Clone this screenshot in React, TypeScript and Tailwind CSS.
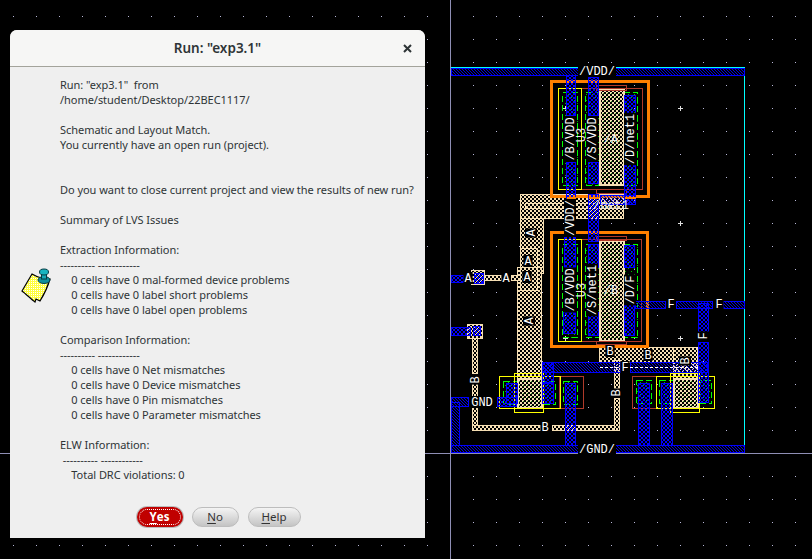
const FONT = "font-['Noto_Sans',sans-serif]";

const bodyText = `Run: "exp3.1"  from
/home/student/Desktop/22BEC1117/

Schematic and Layout Match.
You currently have an open run (project).


Do you want to close current project and view the results of new run?

Summary of LVS Issues

Extraction Information:
---------- ------------
    0 cells have 0 mal-formed device problems
    0 cells have 0 label short problems
    0 cells have 0 label open problems

Comparison Information:
---------- ------------
    0 cells have 0 Net mismatches
    0 cells have 0 Device mismatches
    0 cells have 0 Pin mismatches
    0 cells have 0 Parameter mismatches

ELW Information:
 ---------- ------------
    Total DRC violations: 0`;

type Box = [number, number, number, number];

const grid: number[][] = [];
for (let x = 13; x < 812; x += 23) {
  for (let y = 16; y < 559; y += 23) grid.push([x, y]);
}

// rails are plain hatch, the narrower wires are cross hatch
const rails: Box[] = [
  [451, 68, 744, 75],
  [451, 445, 744, 452],
  [542, 362, 620, 372], [630, 362, 707, 372],
  [635, 301, 665, 308], [676, 301, 712, 308], [723, 301, 744, 308],
  [600, 195, 635, 204],
  [451, 397, 468, 406], [451, 402, 459, 445],
];

const metal: Box[] = [
  [566, 75, 575, 115], [566, 162, 575, 203], [588, 77, 598, 115], [588, 162, 598, 183],
  [624, 95, 635, 113], [624, 162, 635, 204],
  [588, 194, 598, 241], [564, 230, 575, 267], [563, 312, 575, 333], [588, 244, 598, 267],
  [588, 312, 598, 335], [624, 245, 634, 267], [624, 303, 634, 335],
  [698, 303, 708, 332], [698, 342, 708, 402],
  [451, 275, 463, 282], [474, 273, 483, 283], [451, 327, 470, 335], [473, 326, 480, 335],
  [542, 362, 553, 382],
  [506, 383, 517, 403], [542, 383, 553, 403], [565, 383, 575, 445],
  [497, 397, 516, 406],
  [638, 383, 649, 445], [661, 383, 672, 445],
];

const tan: Box[] = [
  [520, 194, 623, 218], [520, 218, 543, 273], [517, 267, 541, 408],
  [599, 347, 697, 362], [673, 347, 697, 408],
  [471, 270, 484, 284], [484, 275, 501, 280], [511, 275, 520, 280],
  [467, 324, 482, 338], [472, 338, 477, 373], [472, 383, 477, 430],
  [472, 425, 540, 430], [552, 425, 619, 430], [614, 360, 619, 388], [614, 398, 619, 430],
];

const gates: Box[] = [
  [599, 89, 623, 184], [599, 240, 623, 340], [517, 378, 541, 407], [673, 378, 697, 407],
];

const green: Box[] = [
  [562, 92, 577, 185], [585, 92, 600, 185], [623, 92, 637, 185],
  [562, 244, 577, 337], [585, 244, 600, 337], [623, 244, 637, 337],
  [503, 381, 555, 404], [563, 381, 577, 404], [636, 380, 651, 403], [659, 380, 711, 403],
];

const brown: Box[] = [
  [581, 88, 642, 189], [596, 85, 626, 90], [596, 189, 626, 193],
  [581, 239, 641, 341], [596, 236, 626, 240], [596, 341, 626, 344],
  [559, 376, 583, 408], [632, 376, 656, 408],
];

const yellow: Box[] = [
  [558, 88, 581, 189], [558, 239, 581, 341],
  [499, 376, 560, 408], [514, 373, 543, 412], [656, 376, 714, 408], [670, 373, 699, 412],
];

type LabelDef = { x: number; y: number; t: string; up?: boolean; dim?: boolean };

const labels: LabelDef[] = [
  { x: 597, y: 71, t: "/VDD/" }, { x: 597, y: 449, t: "/GND/" },
  { x: 570, y: 139, t: "/B/VDD", up: true }, { x: 592, y: 139, t: "/S/VDD", up: true },
  { x: 630, y: 139, t: "/D/net1", up: true }, { x: 570, y: 218, t: "/VDD/", up: true },
  { x: 570, y: 290, t: "/B/VDD", up: true }, { x: 592, y: 290, t: "/S/net1", up: true },
  { x: 630, y: 290, t: "/D/F", up: true },
  { x: 531, y: 233, t: "A", up: true }, { x: 528, y: 261, t: "A" }, { x: 527, y: 277, t: "A" },
  { x: 529, y: 321, t: "A", up: true }, { x: 468, y: 278, t: "A" }, { x: 506, y: 278, t: "A" },
  { x: 671, y: 304, t: "F" }, { x: 719, y: 304, t: "F" }, { x: 703, y: 336, t: "F", up: true },
  { x: 625, y: 367, t: "F" }, { x: 475, y: 380, t: "B", up: true }, { x: 482, y: 402, t: "GND" },
  { x: 545, y: 427, t: "B" }, { x: 616, y: 393, t: "B", up: true },
  { x: 610, y: 351, t: "B" }, { x: 648, y: 355, t: "B" }, { x: 685, y: 361, t: "B", up: true },
  { x: 581, y: 135, t: "U3", up: true, dim: true }, { x: 611, y: 139, t: "/A", dim: true },
  { x: 581, y: 290, t: "U3", up: true, dim: true }, { x: 611, y: 290, t: "/B", dim: true },
  { x: 611, y: 205, t: "/net1", dim: true },
];

function Rects({ items, ...props }: { items: Box[] } & React.SVGProps<SVGRectElement>) {
  return (
    <>
      {items.map(([x1, y1, x2, y2], i) => (
        <rect key={i} x={x1 + 0.5} y={y1 + 0.5} width={x2 - x1} height={y2 - y1} {...props} />
      ))}
    </>
  );
}

function Label({ x, y, t, up, dim }: LabelDef) {
  const w = t.length * 7.2 + 2;
  return (
    <g transform={up ? `rotate(-90 ${x} ${y})` : undefined}>
      {!dim && <rect x={x - w / 2} y={y - 6} width={w} height={12} fill="#000" />}
      <text
        x={x}
        y={y + 4}
        textAnchor="middle"
        fontFamily="'Liberation Mono', monospace"
        fontSize={12}
        fill={dim ? "#e8e8e8" : "#fff"}
      >
        {t}
      </text>
    </g>
  );
}

function Layout() {
  return (
    <svg className="absolute inset-0" width={812} height={559}>
      <defs>
        <pattern id="m1" width="3" height="3" patternUnits="userSpaceOnUse">
          <path d="M0 0h1v1h-1zM1 1h1v1h-1zM2 2h1v1h-1z" fill="#0000e0" />
        </pattern>
        <pattern id="m2" width="4" height="4" patternUnits="userSpaceOnUse">
          <path d="M0 0h1v1h-1zM1 1h1v1h-1zM2 2h1v1h-1zM3 3h1v1h-1zM3 0h1v1h-1zM2 1h1v1h-1zM1 2h1v1h-1zM0 3h1v1h-1z" fill="#0000ff" />
        </pattern>
        <pattern id="poly" width="4" height="4" patternUnits="userSpaceOnUse">
          <rect width="4" height="4" fill="#000" />
          <rect width="2" height="2" fill="#f5deb3" />
          <rect x="2" y="2" width="2" height="2" fill="#f5deb3" />
        </pattern>
        <pattern id="gate" width="4" height="4" patternUnits="userSpaceOnUse">
          <rect width="4" height="4" fill="#f5deb3" />
          <rect width="2" height="2" fill="#000" />
          <rect x="2" y="2" width="2" height="2" fill="#000" />
          <rect x="3" y="1" width="1" height="1" fill="#3fa02a" />
        </pattern>
        <pattern id="diff" width="6" height="6" patternUnits="userSpaceOnUse">
          <rect x="1" y="1" width="1" height="1" fill="#00c000" />
          <rect x="4" y="4" width="1" height="1" fill="#00c000" />
        </pattern>
      </defs>

      <g shapeRendering="crispEdges">
        {grid.map(([x, y], i) => (
          <rect key={i} x={x} y={y} width={1} height={1} fill="#b8b8d8" />
        ))}
        {[565, 680].map((x) =>
          [108, 223, 338].map((y) => (
            <path key={`${x}-${y}`} d={`M${x - 2} ${y}h5M${x} ${y - 2}v5`} stroke="#e0e0e0" fill="none" />
          )),
        )}

        <path d="M450.5 0V559M0 453.5H812" stroke="#8f8fb5" fill="none" />
        <path d="M451 67.5H744.5V453" stroke="#00ffff" fill="none" />

        <Rects items={tan} fill="url(#poly)" stroke="#f5deb3" />
        <Rects items={[[520, 248, 537, 290], [525, 203, 623, 208]]} fill="none" stroke="#f5deb3" />
        <Rects items={green} fill="url(#diff)" stroke="#00ff00" strokeDasharray="6 3" />
        <Rects items={gates} fill="url(#gate)" stroke="#f5deb3" strokeWidth={2} />
        <Rects items={[[551, 81, 648, 196], [551, 232, 647, 346]]} fill="none" stroke="#ff8000" strokeWidth={3} />
        <Rects items={brown} fill="none" stroke="#b03a2a" />
        <Rects items={yellow} fill="none" stroke="#ffff00" />
        <Rects items={rails} fill="url(#m1)" stroke="#0000ff" />
        <Rects items={metal} fill="url(#m2)" stroke="#0000ff" />
        <Rects items={[[566, 196, 575, 198], [588, 196, 598, 198], [624, 196, 635, 198]]} fill="#ff8000" />
        <path d="M600 367.5h20M630 367.5h70" stroke="#fff" strokeDasharray="3 2" fill="none" />
      </g>

      {labels.map((l) => (
        <Label key={`${l.x}-${l.y}`} {...l} />
      ))}
    </svg>
  );
}

function NoteIcon() {
  return (
    <svg width={32} height={36} viewBox="0 0 32 36">
      <defs>
        <pattern id="note" width="2" height="2" patternUnits="userSpaceOnUse">
          <rect width="2" height="2" fill="#ffff40" />
          <rect width="1" height="1" fill="#fff" />
        </pattern>
      </defs>
      <path
        d="M1 23 L11 6 C16 9 22 11 29 11 C27 18 24 25 19 33 L15 31 L14 34 C10 31 5 26 1 23Z"
        fill="url(#note)"
        stroke="#000"
        strokeWidth={1.2}
      />
      <ellipse cx="23" cy="12" rx="6" ry="3.5" fill="#0f8f9b" stroke="#063c44" />
      <rect x="20.5" y="6" width="5" height="5" fill="#15a8b5" stroke="#063c44" />
      <ellipse cx="23" cy="4" rx="4.5" ry="3" fill="#18b4c0" stroke="#063c44" />
    </svg>
  );
}

function DialogButton({ mnemonic, rest, className }: { mnemonic: string; rest: string; className: string }) {
  return (
    <button className={`h-[20px] rounded-full text-[11.5px] leading-none ${className}`}>
      <span className="underline underline-offset-2">{mnemonic}</span>
      {rest}
    </button>
  );
}

export default function App() {
  return (
    <div className={`relative h-[559px] w-[812px] overflow-hidden bg-black ${FONT}`}>
      <Layout />

      <div className="absolute left-[10px] top-[30px] flex h-[508px] w-[415px] flex-col rounded-t-[7px] bg-[#efefef] text-[#2e3436]">
        <div className="relative flex h-[37px] shrink-0 items-center justify-center rounded-t-[7px] border-b border-[#a3a39b] bg-[#f6f6f5]">
          <span className="text-[13.5px] font-semibold">Run: "exp3.1"</span>
          <svg className="absolute right-[13px] top-[14px]" width={9} height={9} viewBox="0 0 9 9">
            <path d="M1 1L8 8M8 1L1 8" stroke="#2e3436" strokeWidth={2} fill="none" />
          </svg>
        </div>

        <div className="flex pt-[10px]">
          <div className="flex w-[50px] shrink-0 items-center pl-[11px] pt-[13px]">
            <NoteIcon />
          </div>
          <div className="whitespace-pre text-[11px] leading-[15px] tracking-[-0.04px]">{bodyText}</div>
        </div>

        <div className="mt-[25px] flex justify-center gap-[9px] pl-[2px]">
          <button className="h-[20px] w-[46px] rounded-full bg-[#c00000] p-[2px] text-[11.5px] font-bold leading-none text-white shadow-[0_0_0_1px_#bbb]">
            <span className="flex h-full items-center justify-center rounded-full border border-dotted border-white">
              <span className="underline underline-offset-2">Y</span>es
            </span>
          </button>
          <DialogButton
            mnemonic="N"
            rest="o"
            className="w-[47px] border border-[#bdbdbd] bg-gradient-to-b from-[#f4f4f4] to-[#c4c4c4] text-[#333]"
          />
          <DialogButton
            mnemonic="H"
            rest="elp"
            className="w-[53px] border border-[#bdbdbd] bg-gradient-to-b from-[#f4f4f4] to-[#c4c4c4] text-[#333]"
          />
        </div>
      </div>
    </div>
  );
}
